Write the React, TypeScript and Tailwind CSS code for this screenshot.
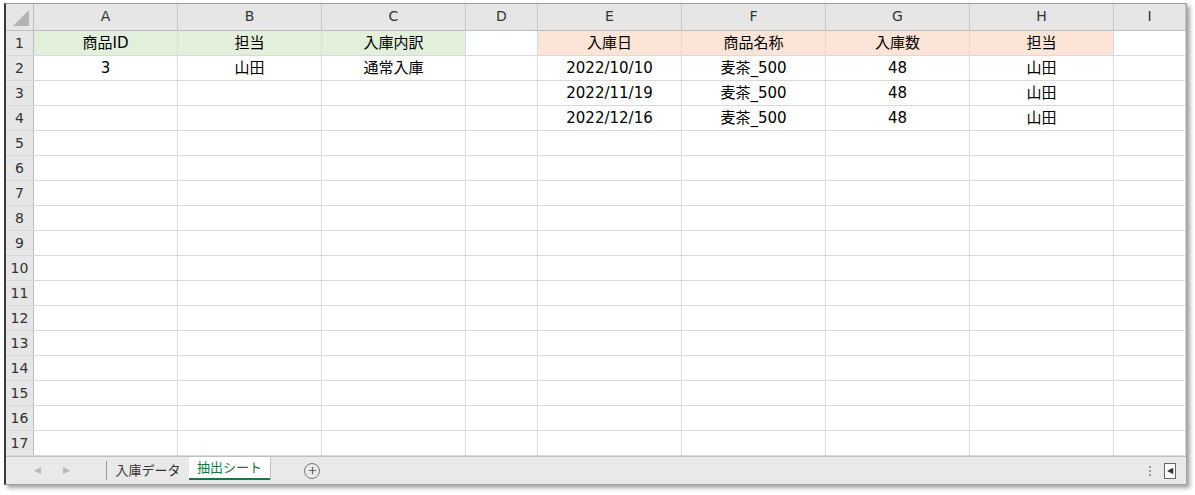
import { Plus } from "lucide-react";

const cols = [
  { id: "A", w: "w-[144px]" },
  { id: "B", w: "w-[144px]" },
  { id: "C", w: "w-[144px]" },
  { id: "D", w: "w-[72px]" },
  { id: "E", w: "w-[144px]" },
  { id: "F", w: "w-[144px]" },
  { id: "G", w: "w-[144px]" },
  { id: "H", w: "w-[144px]" },
  { id: "I", w: "flex-1" },
];

const green = "bg-[#e2efda]";
const orange = "bg-[#fce4d6]";

type Cell = { text?: string; fill?: string };

const data: Record<number, Cell[]> = {
  1: [
    { text: "商品ID", fill: green },
    { text: "担当", fill: green },
    { text: "入庫内訳", fill: green },
    {},
    { text: "入庫日", fill: orange },
    { text: "商品名称", fill: orange },
    { text: "入庫数", fill: orange },
    { text: "担当", fill: orange },
    {},
  ],
  2: [{ text: "3" }, { text: "山田" }, { text: "通常入庫" }, {}, { text: "2022/10/10" }, { text: "麦茶_500" }, { text: "48" }, { text: "山田" }, {}],
  3: [{}, {}, {}, {}, { text: "2022/11/19" }, { text: "麦茶_500" }, { text: "48" }, { text: "山田" }, {}],
  4: [{}, {}, {}, {}, { text: "2022/12/16" }, { text: "麦茶_500" }, { text: "48" }, { text: "山田" }, {}],
};

const rows = Array.from({ length: 17 }, (_, i) => i + 1);

export default function App() {
  return (
    <div className="h-[495px] w-[1195px] bg-white pl-[4px] pt-[3px] font-['DejaVu_Sans','Noto_Sans_CJK_JP',sans-serif]">
      <div className="flex h-[482px] w-[1183px] flex-col overflow-hidden border-l-2 border-t border-r border-b border-l-[#3a3a3a] border-t-[#9a9a9a] border-r-[#a0a0a0] border-b-[#a0a0a0] bg-white shadow-[3px_3px_4px_rgba(0,0,0,0.35)]">
        {/* column headers */}
        <div className="flex h-[27px] shrink-0 border-b border-[#bdbdbd] bg-[#e6e6e6] text-[14px] text-[#333]">
          <div className="relative w-[28px] shrink-0 border-r border-[#bdbdbd]">
            <div className="absolute bottom-[4px] right-[4px] h-0 w-0 border-b-[16px] border-l-[16px] border-b-[#b4b4b4] border-l-transparent" />
          </div>
          {cols.map((c) => (
            <div key={c.id} className={`${c.w} flex shrink-0 items-center justify-center border-r border-[#c8c8c8] pb-[1px]`}>
              {c.id}
            </div>
          ))}
        </div>

        {/* rows */}
        {rows.map((r) => (
          <div key={r} className="flex h-[25px] shrink-0 border-b border-[#dadada] text-[15px] text-black">
            <div className="flex w-[28px] shrink-0 items-center justify-center border-r border-[#bdbdbd] bg-[#e6e6e6] text-[14px] text-[#333]">
              {r}
            </div>
            {cols.map((c, i) => {
              const cell = data[r]?.[i] ?? {};
              return (
                <div
                  key={c.id}
                  className={`${c.w} ${cell.fill ?? ""} flex shrink-0 items-center justify-center border-r border-[#dadada]`}
                >
                  {cell.text}
                </div>
              );
            })}
          </div>
        ))}

        {/* sheet tabs */}
        <div className="flex flex-1 items-stretch border-t border-[#c0c0c0] bg-[#e9e9e9] text-[13px]">
          <div className="flex w-[100px] items-center gap-[22px] pl-[28px] text-[9px] text-[#b8b8b8]">
            <span>◀</span>
            <span>▶</span>
          </div>
          <div className="my-[4px] w-px bg-[#9a9a9a]" />
          <div className="flex w-[82px] items-center justify-center text-[#333]">入庫データ</div>
          <div className="mb-[4px] flex w-[81px] items-center justify-center border-b-2 border-[#217346] bg-white text-[#217346] shadow-[1px_0_0_#c0c0c0]">
            抽出シート
          </div>
          <div className="flex w-[84px] items-center justify-center">
            <span className="flex h-[16px] w-[16px] items-center justify-center rounded-full border border-[#777]">
              <Plus size={11} strokeWidth={2.5} className="text-[#666]" />
            </span>
          </div>
          <div className="flex-1" />
          <div className="flex items-center pr-[10px] text-[#999]">
            <span className="mr-[13px] flex flex-col gap-[2px]">
              <span className="h-[2px] w-[2px] bg-[#999]" />
              <span className="h-[2px] w-[2px] bg-[#999]" />
              <span className="h-[2px] w-[2px] bg-[#999]" />
            </span>
            <span className="flex h-[16px] w-[12px] items-center justify-center border border-[#666] bg-white text-[8px] text-[#333]">◀</span>
          </div>
        </div>
      </div>
    </div>
  );
}
